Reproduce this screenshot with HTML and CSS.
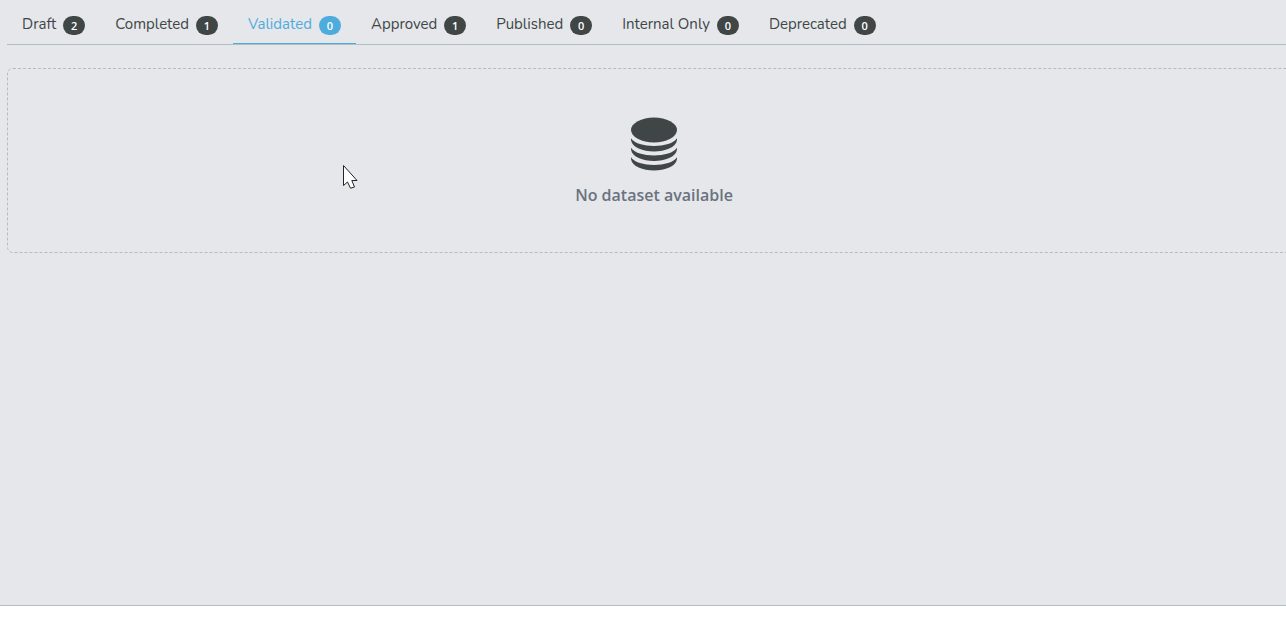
FILE: index.html
```html
<!DOCTYPE html>
<html lang="en">
<head>
<meta charset="utf-8">
<meta name="viewport" content="width=device-width, initial-scale=1">
<title>Datasets</title>
<link rel="stylesheet" href="styles.css">
</head>
<body>
<main class="panel">
  <div class="content">
    <div class="tabs" role="tablist">
      <button class="tab" type="button" role="tab" aria-selected="false">Draft<span class="badge">2</span></button>
      <button class="tab" type="button" role="tab" aria-selected="false">Completed<span class="badge">1</span></button>
      <button class="tab tab-active" type="button" role="tab" aria-selected="true" aria-controls="datasets">Validated<span class="badge">0</span></button>
      <button class="tab" type="button" role="tab" aria-selected="false">Approved<span class="badge">1</span></button>
      <button class="tab" type="button" role="tab" aria-selected="false">Published<span class="badge">0</span></button>
      <button class="tab" type="button" role="tab" aria-selected="false">Internal Only<span class="badge">0</span></button>
      <button class="tab" type="button" role="tab" aria-selected="false">Deprecated<span class="badge">0</span></button>
    </div>
    <section class="empty" id="datasets" role="tabpanel">
      <svg class="empty-icon" viewBox="0 0 46 54" aria-hidden="true">
        <ellipse cx="23" cy="13" rx="23" ry="12.5"/>
        <path d="M0 21.3C6 31.5 40 31.5 46 21.3V23C44 38.2 2 38.2 0 23Z"/>
        <path d="M0 30.8C6 41 40 41 46 30.8V32.5C44 47.7 2 47.7 0 32.5Z"/>
        <path d="M0 40.3C6 50.5 40 50.5 46 40.3V42C44 57.2 2 57.2 0 42Z"/>
      </svg>
      <p class="empty-text">No dataset available</p>
    </section>
  </div>
  <svg class="cursor" viewBox="0 0 16 25" aria-hidden="true">
    <path d="M1.5 1.5V21.5L5.5 18L8.5 24.2L12.5 23L9.8 16.5H15Z"/>
  </svg>
</main>
</body>
</html>
```
FILE: styles.css
```css
* {
  box-sizing: border-box;
}

body {
  margin: 0;
  min-height: 100vh;
  display: flex;
  flex-direction: column;
  padding-bottom: 22px;
  background: #fff;
  font-family: Nunito, "Open Sans", sans-serif;
}

.panel {
  position: relative;
  flex: 1;
  overflow: hidden;
  background: #e5e7eb;
  border-bottom: 1px solid #b0bec5;
}

.content {
  margin: 0 -15px 0 7px;
}

.tabs {
  display: flex;
  padding-top: 5px;
  border-bottom: 1px solid #b0bec5;
}

.tab {
  display: flex;
  align-items: center;
  gap: 7px;
  height: 39px;
  padding: 0 15px;
  border: 0;
  border-bottom: 1px solid transparent;
  background: none;
  color: #404645;
  font-family: inherit;
  font-size: 15px;
  font-weight: 400;
  line-height: 24px;
  white-space: nowrap;
}

.tab-active {
  border-bottom-color: #4eacdd;
  color: #4eacdd;
}

.badge {
  width: 22px;
  height: 19px;
  margin-top: 2px;
  border-radius: 10px;
  background: #404645;
  color: #fff;
  font-family: "Open Sans", sans-serif;
  font-size: 11px;
  font-weight: 600;
  line-height: 19px;
  text-align: center;
}

.tab-active .badge {
  background: #4eacdd;
}

.empty {
  display: flex;
  flex-direction: column;
  align-items: center;
  gap: 12px;
  margin-top: 23px;
  padding: 48px 16px 44px;
  border: 1px dashed #b5bbc1;
  border-radius: 6px;
}

.empty-icon {
  width: 46px;
  height: 54px;
  fill: #404645;
}

.empty-text {
  margin: 0;
  color: #6b7280;
  font-family: "Segoe UI", "Open Sans", sans-serif;
  font-size: 16px;
  font-weight: 600;
  line-height: 25px;
}

.cursor {
  position: absolute;
  left: 342px;
  top: 164px;
  width: 16px;
  height: 25px;
  fill: #fff;
  stroke: #20242c;
  stroke-width: 1;
}
```
